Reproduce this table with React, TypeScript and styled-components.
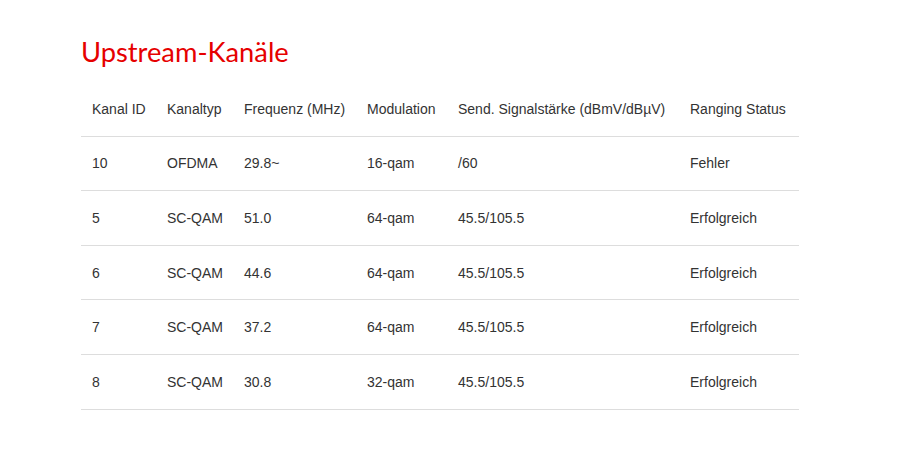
import React from "react";
import styled, { createGlobalStyle } from "styled-components";

const GlobalStyle = createGlobalStyle`
  html, body {
    margin: 0;
    padding: 0;
    background: #fff;
  }
  body {
    font-family: "Liberation Sans", Arial, sans-serif;
    color: #333;
  }
`;

const Page = styled.div`
  padding: 32px 0 0 81px;
  width: 718px;
`;

const Title = styled.h2`
  margin: 0 0 10px;
  font-family: Lato, "Open Sans", sans-serif;
  font-weight: 400;
  font-size: 27.3px;
  line-height: 40px;
  color: #e60000;
`;

const Table = styled.table`
  width: 718px;
  border-collapse: collapse;
  font-size: 14px;
  line-height: 20px;
  table-layout: fixed;
`;

const Th = styled.th<{ $w: number }>`
  box-sizing: border-box;
  width: ${(p) => p.$w}px;
  text-align: left;
  font-weight: 400;
  padding: 16.8px 11px;
  border-bottom: 1px solid #ddd;
  white-space: nowrap;
`;

const Td = styled.td`
  padding: 16.8px 11px;
  border-bottom: 1px solid #ddd;
  white-space: nowrap;
`;

const columns: [string, number][] = [
  ["Kanal ID", 75],
  ["Kanaltyp", 77],
  ["Frequenz (MHz)", 123],
  ["Modulation", 91],
  ["Send. Signalstärke (dBmV/dBµV)", 232],
  ["Ranging Status", 120],
];

const rows = [
  ["10", "OFDMA", "29.8~", "16-qam", "/60", "Fehler"],
  ["5", "SC-QAM", "51.0", "64-qam", "45.5/105.5", "Erfolgreich"],
  ["6", "SC-QAM", "44.6", "64-qam", "45.5/105.5", "Erfolgreich"],
  ["7", "SC-QAM", "37.2", "64-qam", "45.5/105.5", "Erfolgreich"],
  ["8", "SC-QAM", "30.8", "32-qam", "45.5/105.5", "Erfolgreich"],
];

const App: React.FC = () => {
  return (
    <>
      <GlobalStyle />
      <Page>
        <Title>Upstream-Kanäle</Title>
        <Table>
          <thead>
            <tr>
              {columns.map(([label, w]) => (
                <Th key={label} $w={w}>
                  {label}
                </Th>
              ))}
            </tr>
          </thead>
          <tbody>
            {rows.map((r) => (
              <tr key={r[0]}>
                {r.map((c, i) => (
                  <Td key={i}>{c}</Td>
                ))}
              </tr>
            ))}
          </tbody>
        </Table>
      </Page>
    </>
  );
};

export default App;
